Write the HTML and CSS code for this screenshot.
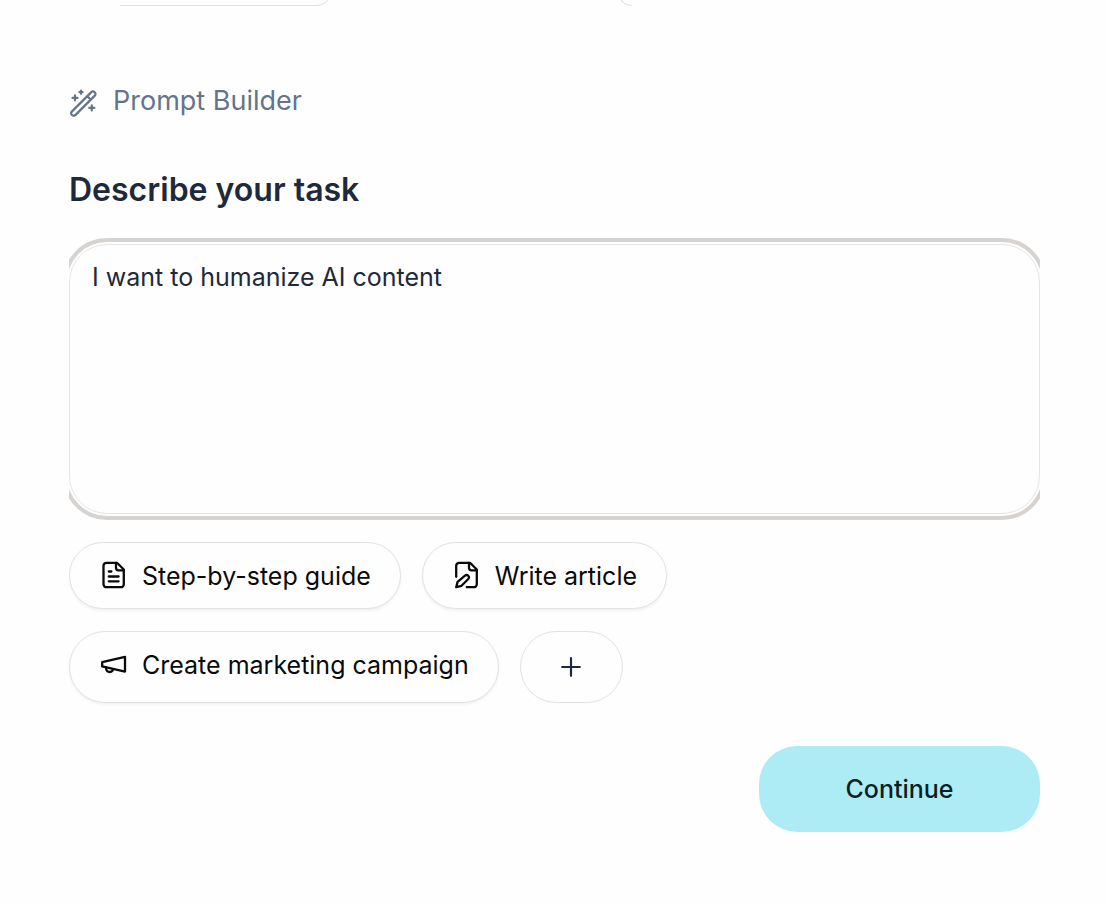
FILE: index.html
```html
<!DOCTYPE html>
<html lang="en">
<head>
    <meta charset="UTF-8">
    <meta name="viewport" content="width=device-width, initial-scale=1.0">
    <title>Prompt Builder</title>
    <link rel="stylesheet" href="styles.css">
</head>
<body>

<div class="previous-cards">
    <div class="card card-left"></div>
    <div class="card card-right"></div>
</div>

<main class="builder">
    <header class="builder-header">
        <svg class="icon" viewBox="0 0 28 28" fill="none" stroke="currentColor" stroke-width="2.2" stroke-linecap="round" stroke-linejoin="round">
            <path d="M2.8 22.6 L22.3 3.1 a2.2 2.2 0 0 1 3.2 0 l.3 .3 a2.2 2.2 0 0 1 0 3.2 L6.3 26.1 a2.2 2.2 0 0 1 -3.2 0 l-.3 -.3 a2.2 2.2 0 0 1 0 -3.2z M18.4 7.3 l3.2 3.2"/>
            <path d="M6 6.4v5 M3.5 8.9h5 M12 1.6v3.2 M10.4 3.2h3.2 M22.8 16.4v5 M20.3 18.9h5"/>
        </svg>
        <span>Prompt Builder</span>
    </header>

    <form>
        <label class="title" for="task">Describe your task</label>
        <div class="task-box">
            <textarea id="task" name="task">I want to humanize AI content</textarea>
        </div>

        <div class="suggestions">
            <button type="button" class="chip">
                <svg class="icon" viewBox="0 0 28 28" fill="none" stroke="currentColor" stroke-width="2.3" stroke-linecap="round" stroke-linejoin="round">
                    <path d="M18 1.8H7.5a3 3 0 0 0 -3 3v18.4a3 3 0 0 0 3 3h14.3a3 3 0 0 0 3 -3V8.5z"/>
                    <path d="M17 1.8v5a2.5 2.5 0 0 0 2.5 2.5h5"/>
                    <path d="M9.8 10.5h2.6 M9.8 15.5h9.8 M9.8 20.3h9.8"/>
                </svg>
                Step-by-step guide
            </button>
            <button type="button" class="chip">
                <svg class="icon" viewBox="0 0 28 28" fill="none" stroke="currentColor" stroke-width="2.3" stroke-linecap="round" stroke-linejoin="round">
                    <path d="M4.2 15.8v-11a3 3 0 0 1 3 -3h10.8l6.8 6.7v14.7a3 3 0 0 1 -3 3h-7"/>
                    <path d="M17 1.8v5a2.5 2.5 0 0 0 2.5 2.5h5"/>
                    <path d="M13 14.7a2.3 2.3 0 0 1 3.3 0a2.3 2.3 0 0 1 0 3.3l-6.8 6.8l-5.3 1.4l1.4 -5.3z"/>
                </svg>
                Write article
            </button>
            <button type="button" class="chip">
                <svg class="icon" viewBox="0 0 28 28" fill="none" stroke="currentColor" stroke-width="2.3" stroke-linecap="round" stroke-linejoin="round">
                    <path d="M3.2 12.2L26 6.8V21.6L3.2 16.4z"/>
                    <path d="M14.2 19.3a3.6 3.6 0 1 1 -7 -1.8"/>
                </svg>
                Create marketing campaign
            </button>
            <button type="button" class="chip-add" aria-label="Add suggestion">
                <svg class="icon-add" viewBox="0 0 20 20" fill="none" stroke="currentColor" stroke-width="2.2" stroke-linecap="round">
                    <path d="M10 1.2v17.6 M1.2 10h17.6"/>
                </svg>
            </button>
        </div>

        <div class="actions">
            <button type="submit" class="continue">Continue</button>
        </div>
    </form>
</main>

</body>
</html>
```
FILE: styles.css
```css
* { box-sizing: border-box; }
body { margin: 0; background-color: #fefefe; color: #1e293b; font-family: Inter, sans-serif; }
button, textarea { font: inherit; }

.previous-cards { display: flex; gap: 286px; align-items: flex-end; height: 6px; padding-left: 120px; overflow: hidden; }
.card { height: 40px; border: 1px solid #e2e2e2; }
.card-left { width: 212px; border-left: none; border-bottom-right-radius: 16px; }
.card-right { width: 14px; border-right: none; border-bottom-left-radius: 14px; }

.builder { padding: 77px 66px 72px 69px; }
.builder-header { display: flex; align-items: center; gap: 16px; color: #64748b; font-size: 27px; line-height: 36px; }
.builder-header .icon { margin-top: 4px; }
.icon { width: 28px; height: 28px; flex: none; }

.title { display: block; margin-top: 47px; font-size: 32px; font-weight: 600; line-height: 48px; }

/* the focus ring is cut off at the sides by the wrapper */
.task-box { margin-top: 24px; padding: 6px 0; overflow: hidden; }
textarea {
    display: block; width: 100%; height: 270px; padding: 16px 22px; resize: none; outline: none;
    border: 1px solid #e5e5e5; border-radius: 38px; background-color: #fefefe; color: #1e293b;
    font-size: 25px; line-height: 32px;
    box-shadow: 0 0 0 2px #fefefe, 0 0 0 6px #d6d3d1;
}

.suggestions { display: flex; flex-wrap: wrap; gap: 22px 21px; margin-top: 22px; }
.chip {
    display: flex; align-items: flex-start; gap: 15px; padding: 18px 29px 17px; cursor: pointer;
    border: 1px solid #e2e2e2; border-radius: 36px; background-color: #fefefe; color: #0a0a0a;
    font-size: 25px; line-height: 30px; box-shadow: 0 2px 3px rgba(0, 0, 0, 0.05);
}
.chip-add {
    display: flex; align-items: center; justify-content: center; width: 103px; height: 72px; cursor: pointer;
    border: 1px solid #e2e2e2; border-radius: 36px; background-color: #fefefe; color: #1e293b;
}
.icon-add { width: 20px; height: 20px; }

.actions { display: flex; justify-content: flex-end; margin-top: 43px; }
.continue {
    width: 281px; height: 86px; border: none; border-radius: 38px; cursor: pointer;
    background-color: #aeecf5; color: #0a1f24; font-size: 25px; font-weight: 500;
}
```
